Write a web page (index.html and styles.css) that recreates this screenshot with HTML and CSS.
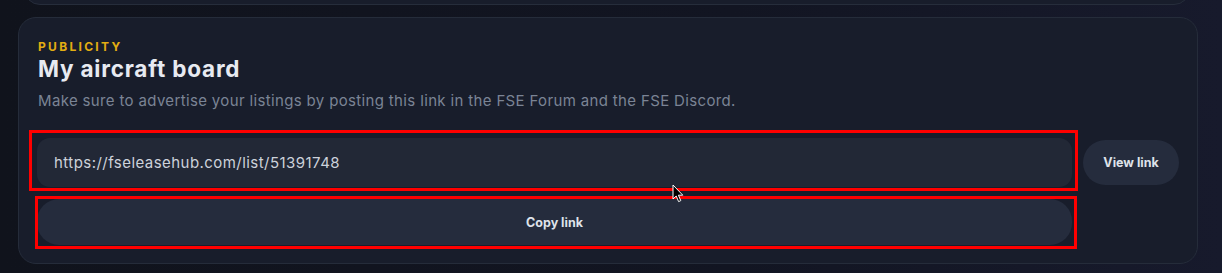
FILE: index.html
```html
<!DOCTYPE html>
<html lang="en">
<head>
<meta charset="utf-8">
<title>My aircraft board</title>
<link rel="stylesheet" href="styles.css">
</head>
<body>
<div class="page">
  <div class="prev-card"></div>
  <section class="card">
    <div class="eyebrow">PUBLICITY</div>
    <h2 class="title">My aircraft board</h2>
    <p class="desc">Make sure to advertise your listings by posting this link in the FSE Forum and the FSE Discord.</p>
    <div class="link-grid">
      <div class="link-input">https://fseleasehub.com/list/51391748</div>
      <button class="btn btn-view">View link</button>
      <button class="btn btn-copy">Copy link</button>
    </div>
    <div class="mark mark-input"></div>
    <div class="mark mark-copy"></div>
    <svg class="cursor" width="12" height="19" viewBox="0 0 12 19"><path d="M1 1 L1 15 L4.2 12 L6.6 17.6 L8.8 16.6 L6.4 11.2 L10.8 11.2 Z" fill="#000" stroke="#fff" stroke-width="1"/></svg>
  </section>
</div>
</body>
</html>
```
FILE: styles.css
```css
* { box-sizing: border-box; }
html, body {
  margin: 0;
  padding: 0;
  height: 100%;
}
body {
  background: linear-gradient(90deg, #10131c 0%, #121522 60%, #171a2c 100%);
  font-family: Inter, "Noto Sans", sans-serif;
  overflow: hidden;
}
.page {
  width: 1222px;
  height: 273px;
  position: relative;
}
.prev-card {
  margin-left: 24px;
  width: 1166px;
  height: 40px;
  margin-top: -35px;
  background: #181d2b;
  border: 1px solid #262d3b;
  border-radius: 0 0 16px 16px;
}
.card {
  position: relative;
  margin-top: 12px;
  margin-left: 18px;
  width: 1180px;
  height: 247px;
  background: #181d2b;
  border: 1px solid #252c3a;
  border-radius: 18px;
  padding: 21px 18px 17px 18px;
}
.eyebrow {
  color: #e3ad12;
  font-size: 12px;
  font-weight: 700;
  letter-spacing: 2.3px;
  line-height: 16px;
  margin-left: 1px;
}
.title {
  margin: 0;
  color: #e7eaf1;
  font-size: 22.5px;
  font-weight: 700;
  line-height: 28px;
  letter-spacing: 0.8px;
  margin-left: 1px;
}
.desc {
  margin: 7px 0 0 1px;
  color: #7b8495;
  font-size: 15px;
  line-height: 22px;
  letter-spacing: 0.35px;
}
.link-grid {
  display: grid;
  grid-template-columns: 1fr auto;
  column-gap: 11px;
  row-gap: 12px;
  align-items: center;
  margin-top: 26px;
}
.link-input {
  height: 49px;
  background: #222836;
  border-radius: 13px;
  color: #cdd2db;
  font-size: 15px;
  line-height: 49px;
  padding-left: 17px;
  letter-spacing: 0.45px;
}
.btn {
  border: none;
  font-family: Inter, "Noto Sans", sans-serif;
  font-size: 12.5px;
  font-weight: 700;
  color: #dfe3ea;
  background: #252c3d;
  cursor: pointer;
}
.btn-view {
  width: 96px;
  height: 45px;
  border-radius: 23px;
}
.btn-copy {
  height: 46px;
  border-radius: 22px;
}
.mark {
  position: absolute;
  border: 3px solid #ff0000;
  pointer-events: none;
}
.mark-input {
  left: 10px;
  top: 112px;
  width: 1049px;
  height: 61px;
}
.mark-copy {
  left: 16px;
  top: 178px;
  width: 1042px;
  height: 53px;
}
.cursor {
  position: absolute;
  left: 653px;
  top: 166px;
}
```
